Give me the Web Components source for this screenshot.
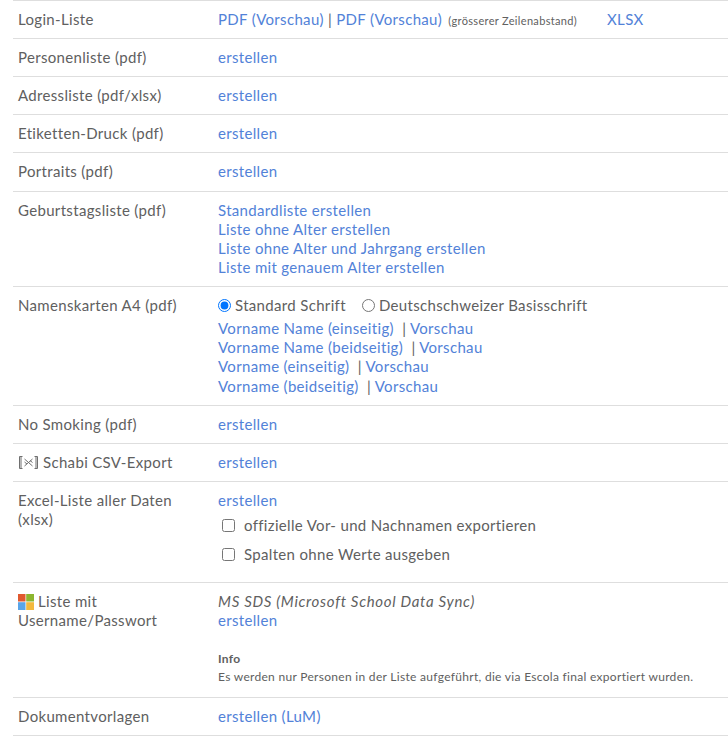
<!DOCTYPE html>
<html lang="de"><head><meta charset="utf-8"><title>Listen</title>
<style>
html,body{margin:0;padding:0;background:#fff}
body{font:15px/19.11px Lato,"Open Sans",sans-serif;letter-spacing:.33px;color:#606060}
</style></head><body>
<report-list>
<report-row label="Login-Liste"><div><a-l>PDF (Vorschau)</a-l> | <a-l>PDF (Vorschau)</a-l> <small-note>(grösserer Zeilenabstand)</small-note><a-l style="margin-left:30px">XLSX</a-l></div></report-row>
<report-row label="Personenliste (pdf)"><a-l>erstellen</a-l></report-row>
<report-row label="Adressliste (pdf/xlsx)"><a-l>erstellen</a-l></report-row>
<report-row label="Etiketten-Druck (pdf)"><a-l>erstellen</a-l></report-row>
<report-row label="Portraits (pdf)"><a-l>erstellen</a-l></report-row>
<report-row label="Geburtstagsliste (pdf)"><a-l block>Standardliste erstellen</a-l><a-l block>Liste ohne Alter erstellen</a-l><a-l block>Liste ohne Alter und Jahrgang erstellen</a-l><a-l block>Liste mit genauem Alter erstellen</a-l></report-row>
<report-row label="Namenskarten A4 (pdf)"><font-choice></font-choice>
<div><a-l>Vorname Name (einseitig)</a-l> &nbsp;| <a-l>Vorschau</a-l></div><div><a-l>Vorname Name (beidseitig)</a-l> &nbsp;| <a-l>Vorschau</a-l></div><div><a-l>Vorname (einseitig)</a-l> &nbsp;| <a-l>Vorschau</a-l></div><div><a-l>Vorname (beidseitig)</a-l> &nbsp;| <a-l>Vorschau</a-l></div></report-row>
<report-row label="No Smoking (pdf)"><a-l>erstellen</a-l></report-row>
<report-row><svg slot="label" width="21" height="15" viewBox="0 0 21 15" style="vertical-align:-2px;margin-right:4px" fill="none" stroke="#6f6f6f"><path d="M4.5 1.5H1.5V13.5H4.5M3 2V13M16.5 1.5H19.5V13.5H16.5M18 2V13"/><path d="M6.5 4L14.5 11M14.5 4L6.5 11M6.5 7l2.5 2M12 5.5l2.5 2"/></svg><span slot="label">Schabi CSV-Export</span><a-l>erstellen</a-l></report-row>
<report-row label="Excel-Liste aller Daten (xlsx)"><a-l>erstellen</a-l><check-group><check-line>offizielle Vor- und Nachnamen exportieren</check-line><check-line>Spalten ohne Werte ausgeben</check-line></check-group></report-row>
<report-row><svg slot="label" width="16" height="16" viewBox="0 0 16 16" style="vertical-align:-3px;margin-right:4px"><rect width="7.5" height="7.5" fill="#e0592f"/><rect x="8.2" width="7.8" height="7.5" fill="#8cb62f"/><rect y="8.2" width="7.5" height="7.8" fill="#5aa5e8"/><rect x="8.2" y="8.2" width="7.8" height="7.8" fill="#f3b93c"/></svg><span slot="label">Liste mit Username/Passwort</span><div style="font-style:italic;letter-spacing:.7px">MS SDS (Microsoft School Data Sync)</div><a-l block>erstellen</a-l><info-note heading="Info">Es werden nur Personen in der Liste aufgeführt, die via Escola final exportiert wurden.</info-note></report-row>
<report-row label="Dokumentvorlagen"><a-l>erstellen (LuM)</a-l></report-row>
</report-list>
<script>
function def(name,html){customElements.define(name,class extends HTMLElement{
 connectedCallback(){if(this.shadowRoot)return;const r=this.attachShadow({mode:'open'});r.innerHTML=typeof html==='function'?html(this):html;}
});}
def('report-list',`<style>:host{display:block;margin-left:13px;border-bottom:1px solid #dedede}</style><slot></slot>`);
def('report-row',h=>`<style>:host{display:grid;grid-template-columns:200px 1fr;border-top:1px solid #dedede}
.l{padding:9px 5px}.c{padding:9px 5px;min-width:0}</style>
<div class="l"><slot name="label">${h.getAttribute('label')||''}</slot></div><div class="c"><slot></slot></div>`);
def('a-l',h=>`<style>:host{color:#5282d8;display:${h.hasAttribute('block')?'block':'inline'}}</style><slot></slot>`);
def('small-note',`<style>:host{font-size:11px;line-height:1;margin-left:2px}</style><slot></slot>`);
def('font-choice',`<style>:host{display:flex;align-items:center;height:19.11px;margin-bottom:4.1px}
input{margin:0 4px 0 0;width:13px;height:13px;accent-color:#0075ff}label{display:flex;align-items:center;margin-right:16px}</style>
<label><input type="radio" name="f" checked>Standard Schrift</label><label><input type="radio" name="f">Deutschschweizer Basisschrift</label>`);
def('check-group',`<style>:host{display:grid;gap:10px;margin:6.5px 0 8.5px 4px}</style><slot></slot>`);
def('check-line',`<style>:host{display:flex;align-items:center;height:19px}
input{margin:0 9px 0 0;width:13px;height:13px}</style><input type="checkbox"><slot></slot>`);
def('info-note',h=>`<style>:host{display:block;margin:20px 0 2px;font-size:12px;line-height:18px;letter-spacing:.3px}b{display:block;font-weight:700}</style><b>${h.getAttribute('heading')}</b><slot></slot>`);
</script>
</body></html>
